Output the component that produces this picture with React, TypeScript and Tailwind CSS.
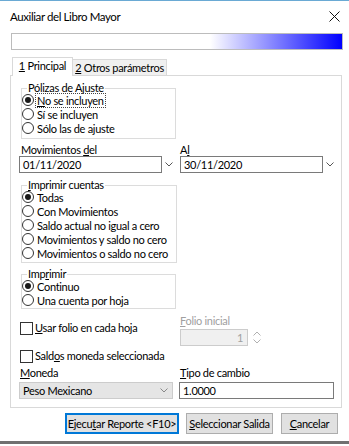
import React from 'react';

function Radio({ checked, label, focus }: { checked?: boolean; label: React.ReactNode; focus?: boolean }) {
  return (
    <div className="flex items-center h-[14px]">
      <span className="w-[12px] h-[12px] rounded-full border border-[#333] bg-white flex items-center justify-center shrink-0">
        {checked && <span className="w-[6px] h-[6px] rounded-full bg-[#1a1a1a]" />}
      </span>
      <span className={focus ? 'ml-[2px] px-[1px] leading-[13px] outline-1 outline-dotted outline-[#444]' : 'ml-[3px] leading-[13px]'}>
        {label}
      </span>
    </div>
  );
}

function Check({ label }: { label: React.ReactNode }) {
  return (
    <div className="flex items-center h-[14px]">
      <span className="w-[13px] h-[13px] border border-[#333] bg-white shrink-0" />
      <span className="ml-[2px]">{label}</span>
    </div>
  );
}

function Chevron({ color = '#555' }: { color?: string }) {
  return (
    <svg width="8" height="5" viewBox="0 0 8 5">
      <path d="M0.5 0.5 L4 4 L7.5 0.5" fill="none" stroke={color} strokeWidth="1" />
    </svg>
  );
}

function Group({ title, className, children }: { title: React.ReactNode; className: string; children: React.ReactNode }) {
  return (
    <fieldset className={'border border-[#dcdcdc] px-0 ' + className}>
      <legend className="ml-[5px] px-[1px] leading-[10px]">{title}</legend>
      {children}
    </fieldset>
  );
}

export default function App() {
  return (
    <div className="w-[349px] h-[446px] bg-white border-t border-[#6aaad4] font-['Lato','Segoe_UI',sans-serif] text-[11px] tracking-[-0.3px] text-black leading-[14px] overflow-hidden">
      {/* Title bar */}
      <div className="h-[31px] flex items-center justify-between pl-[10px] pr-[9px]">
        <span className="text-[11.5px] tracking-[-0.4px]">Auxiliar del Libro Mayor</span>
        <svg width="11" height="11" viewBox="0 0 11 11">
          <path d="M0.5 0.5 L10.5 10.5 M10.5 0.5 L0.5 10.5" stroke="#111" strokeWidth="1" />
        </svg>
      </div>

      {/* Progress */}
      <div className="ml-[11px] mr-[6px] mt-[1px] h-[17px] border border-[#bcbcbc] bg-[linear-gradient(to_right,#ffffff_60%,#0000ff)]" />

      {/* Tabs */}
      <div className="ml-[12px] mt-[7px] flex items-end h-[18px]">
        <div className="w-[61px] h-[19px] border border-b-0 border-[#d9d9d9] bg-white flex items-center justify-center relative z-10 -mb-px pb-[2px]">
          <span><u>1</u> Principal</span>
        </div>
        <div className="w-[94px] h-[16px] border border-l-0 border-b-0 border-[#d9d9d9] bg-[#f0f0f0] flex items-center justify-center">
          <span><u>2</u> Otros parámetros</span>
        </div>
      </div>

      {/* Panel */}
      <div className="ml-[10px] mr-[7px] h-[333px] border border-[#d9d9d9] pl-[8px] pt-[7px]">
        <Group title={<span>Pólizas de Ajuste</span>} className="ml-[2px] w-[155px] h-[56px]">
          <Radio checked focus label={<span><u>N</u>o se incluyen</span>} />
          <Radio label="Sí se incluyen" />
          <Radio label="Sólo las de ajuste" />
        </Group>

        <div className="flex mt-[5px]">
          <div className="w-[161px]">
            <div className="leading-[12px] pl-[2px]">Movimientos <u>d</u>el</div>
            <div className="flex items-center">
              <div className="w-[143px] h-[17px] border border-[#7a7a7a] pl-[3px] flex items-center">01/11/2020</div>
              <span className="ml-[3px] w-[8px] flex"><Chevron /></span>
            </div>
          </div>
          <div>
            <div className="leading-[12px]">A<u>l</u></div>
            <div className="flex items-center">
              <div className="w-[143px] h-[17px] border border-[#7a7a7a] pl-[3px] flex items-center">30/11/2020</div>
              <span className="ml-[3px] w-[8px] flex"><Chevron /></span>
            </div>
          </div>
        </div>

        <Group title={<span><u>I</u>mprimir cuentas</span>} className="ml-[2px] w-[156px] h-[83px] mt-[7px]">
          <Radio checked label="Todas" />
          <Radio label="Con Movimientos" />
          <Radio label="Saldo actual no igual a cero" />
          <Radio label="Movimientos y saldo no cero" />
          <Radio label="Movimientos o saldo no cero" />
        </Group>

        <Group title={<span>Imp<u>r</u>imir</span>} className="ml-[2px] w-[155px] h-[40px] mt-[6px]">
          <Radio checked label="Continuo" />
          <Radio label="Una cuenta por hoja" />
        </Group>

        <div className="flex mt-[6px]">
          <div className="w-[161px] pl-[1px] pt-[6px]">
            <Check label={<span><u>U</u>sar folio en cada hoja</span>} />
          </div>
          <div>
            <div className="leading-[12px] text-[#a0a0a0]"><u>F</u>olio inicial</div>
            <div className="flex items-center mt-[2px]">
              <div className="w-[68px] h-[17px] bg-[#f0f0f0] border border-[#cccccc] text-[#a0a0a0] flex items-center justify-end pr-[4px]">1</div>
              <div className="ml-[5px] flex flex-col gap-[3px]">
                <svg width="8" height="5" viewBox="0 0 8 5"><path d="M0.5 4.5 L4 1 L7.5 4.5" fill="none" stroke="#b0b0b0" strokeWidth="1" /></svg>
                <svg width="8" height="5" viewBox="0 0 8 5"><path d="M0.5 0.5 L4 4 L7.5 0.5" fill="none" stroke="#b0b0b0" strokeWidth="1" /></svg>
              </div>
            </div>
          </div>
        </div>

        <div className="mt-[3px] pl-[1px]">
          <Check label={<span>Sald<u>o</u>s moneda seleccionada</span>} />
        </div>

        <div className="flex mt-[4px]">
          <div className="w-[160px]">
            <div className="leading-[12px] pl-[1px]"><u>M</u>oneda</div>
            <div className="mt-[3px] w-[154px] h-[17px] bg-[#e5e5e5] border border-[#cccccc] pl-[3px] pr-[4px] flex items-center justify-between">
              <span>Peso Mexicano</span>
              <Chevron color="#888" />
            </div>
          </div>
          <div>
            <div className="leading-[12px] pl-[1px]"><u>T</u>ipo de cambio</div>
            <div className="mt-[3px] w-[155px] h-[17px] border border-[#7a7a7a] pl-[3px] flex items-center">1.0000</div>
          </div>
        </div>
      </div>

      {/* Buttons */}
      <div className="flex pl-[65px] gap-[7px] mt-[5px]">
        <button className="w-[114px] h-[21px] bg-[#e1e1e1] border border-[#0078d7] outline-1 outline-[#0078d7] -outline-offset-2 flex items-center justify-center">Ejecu<u>t</u>ar Reporte &lt;F10&gt;</button>
        <button className="w-[87px] h-[21px] bg-[#e1e1e1] border border-[#adadad] flex items-center justify-center"><u>S</u>eleccionar Salida</button>
        <button className="w-[57px] h-[21px] ml-[1px] bg-[#e1e1e1] border border-[#adadad] flex items-center justify-center"><u>C</u>ancelar</button>
      </div>

      <div className="mt-[7px] h-[3px] bg-[#707070]" />
    </div>
  );
}
